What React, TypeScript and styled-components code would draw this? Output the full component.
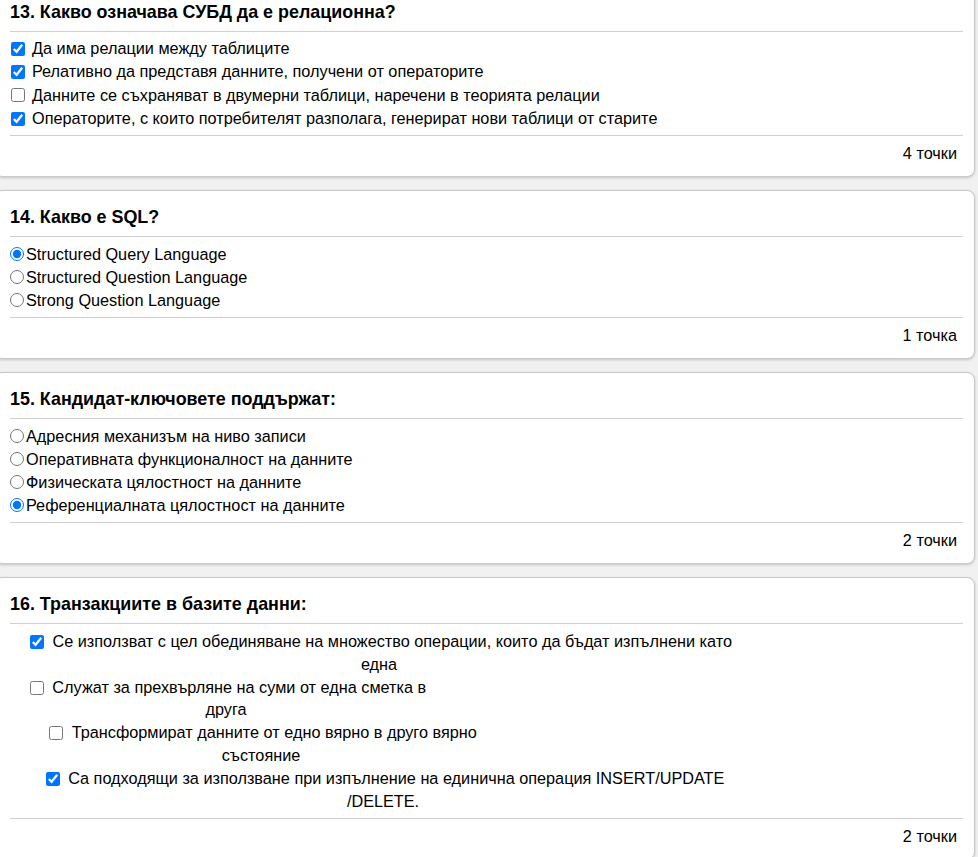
import React from "react";
import styled, { createGlobalStyle } from "styled-components";

const GlobalStyle = createGlobalStyle`
  html, body { margin: 0; padding: 0; background: #f1f1f1; }
  body {
    font-family: "Liberation Sans", Arial, sans-serif;
    color: #000;
    overflow: hidden;
  }
`;

const Page = styled.main`
  display: flex;
  flex-direction: column;
  gap: 13px;
  width: 981px;
  margin: -15px 0 0 -6px;
`;

const Card = styled.section`
  background: #fff;
  border: 1px solid #c9c9c9;
  border-radius: 8px;
  box-shadow: 0 1px 3px rgba(0, 0, 0, 0.18);
  padding: 15px 11px 12px 15px;
`;

const Title = styled.h2`
  margin: 0;
  padding-bottom: 8px;
  font-size: 17.9px;
  line-height: 22px;
  font-weight: bold;
`;

const Divider = styled.hr`
  border: 0;
  height: 1px;
  margin: 0;
  background: #cfcfcf;
`;

const Options = styled.div<{ $pad: number }>`
  display: flex;
  flex-direction: column;
  align-items: flex-start;
  padding: ${(p) => p.$pad}px 0;
`;

const Row = styled.label<{ $h: number }>`
  display: flex;
  align-items: center;
  height: ${(p) => p.$h}px;
  font-size: 16.25px;
`;

const Check = styled.input`
  width: 14px;
  height: 14px;
  margin: 0 7px 0 1px;
`;

const Radio = styled.input`
  width: 14px;
  height: 14px;
  margin: 0 2px 0 0;
`;

const CenteredOption = styled.label<{ $w: number }>`
  display: block;
  width: ${(p) => p.$w}px;
  text-align: center;
  font-size: 16.25px;
  line-height: 22.86px;
`;

const InlineCheck = styled.input`
  width: 14px;
  height: 14px;
  margin: 0 4px 0 4px;
  vertical-align: -2px;
`;

const Points = styled.div`
  padding: 6px 6px 0 0;
  font-size: 16.25px;
  line-height: 22px;
  text-align: right;
`;

type Opt = { text: string; checked: boolean };

const q13: Opt[] = [
  { text: "Да има релации между таблиците", checked: true },
  { text: "Релативно да представя данните, получени от операторите", checked: true },
  { text: "Данните се съхраняват в двумерни таблици, наречени в теорията релации", checked: false },
  { text: "Операторите, с които потребителят разполага, генерират нови таблици от старите", checked: true },
];

const q14: Opt[] = [
  { text: "Structured Query Language", checked: true },
  { text: "Structured Question Language", checked: false },
  { text: "Strong Question Language", checked: false },
];

const q15: Opt[] = [
  { text: "Адресния механизъм на ниво записи", checked: false },
  { text: "Оперативната функционалност на данните", checked: false },
  { text: "Физическата цялостност на данните", checked: false },
  { text: "Референциалната цялостност на данните", checked: true },
];

const q16: { lines: [string, string]; checked: boolean; w: number }[] = [
  {
    lines: ["Се използват с цел обединяване на множество операции, които да бъдат изпълнени като", "една"],
    checked: true,
    w: 738,
  },
  { lines: ["Служат за прехвърляне на суми от една сметка в", "друга"], checked: false, w: 432 },
  { lines: ["Трансформират данните от едно вярно в друго вярно", "състояние"], checked: false, w: 502 },
  {
    lines: ["Са подходящи за използване при изпълнение на единична операция INSERT/UPDATE", "/DELETE."],
    checked: true,
    w: 746,
  },
];

export default function App() {
  return (
    <>
      <GlobalStyle />
      <Page>
        <Card>
          <Title>13. Какво означава СУБД да е релационна?</Title>
          <Divider />
          <Options $pad={5}>
            {q13.map((o) => (
              <Row key={o.text} $h={23.33}>
                <Check type="checkbox" defaultChecked={o.checked} />
                {o.text}
              </Row>
            ))}
          </Options>
          <Divider />
          <Points>4 точки</Points>
        </Card>

        <Card>
          <Title>14. Какво е SQL?</Title>
          <Divider />
          <Options $pad={5.5}>
            {q14.map((o) => (
              <Row key={o.text} $h={23}>
                <Radio type="radio" name="q14" defaultChecked={o.checked} />
                {o.text}
              </Row>
            ))}
          </Options>
          <Divider />
          <Points>1 точка</Points>
        </Card>

        <Card>
          <Title>15. Кандидат-ключовете поддържат:</Title>
          <Divider />
          <Options $pad={5.5}>
            {q15.map((o) => (
              <Row key={o.text} $h={23}>
                <Radio type="radio" name="q15" defaultChecked={o.checked} />
                {o.text}
              </Row>
            ))}
          </Options>
          <Divider />
          <Points>2 точки</Points>
        </Card>

        <Card>
          <Title>16. Транзакциите в базите данни:</Title>
          <Divider />
          <Options $pad={5.5}>
            {q16.map((o) => (
              <CenteredOption key={o.lines[0]} $w={o.w}>
                <InlineCheck type="checkbox" defaultChecked={o.checked} /> {o.lines[0]}
                <br />
                {o.lines[1]}
              </CenteredOption>
            ))}
          </Options>
          <Divider />
          <Points>2 точки</Points>
        </Card>
      </Page>
    </>
  );
}
